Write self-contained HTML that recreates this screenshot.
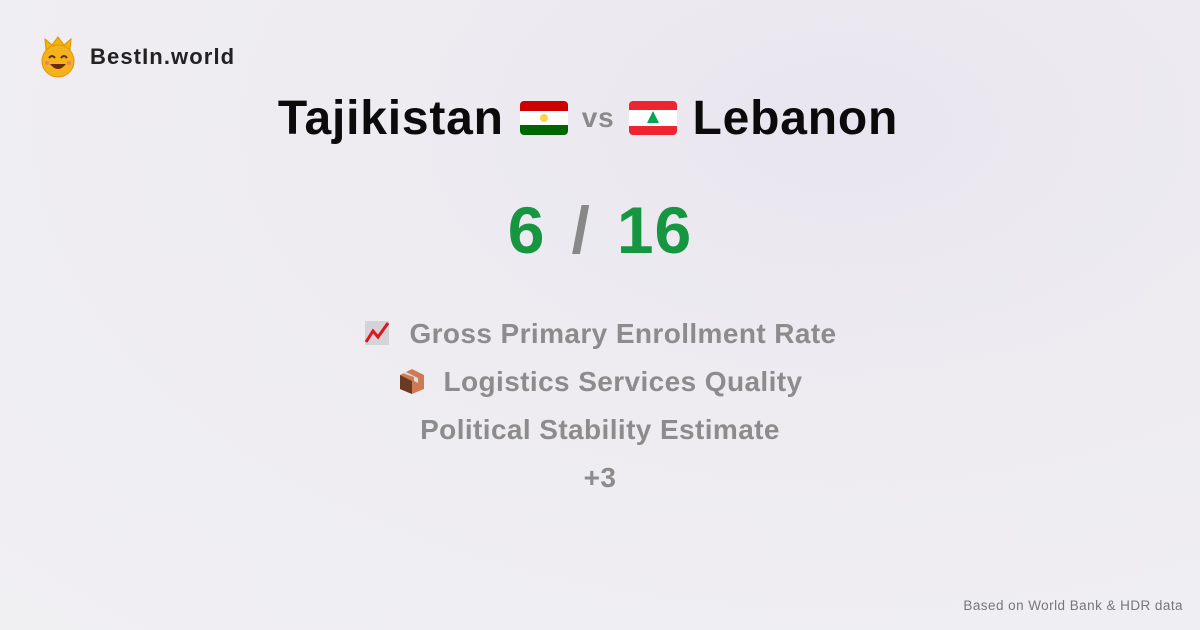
<!DOCTYPE html>
<html><head><meta charset="utf-8"><style>
*{margin:0;padding:0;box-sizing:border-box}
body{width:1200px;height:630px;overflow:hidden;font-family:"Liberation Sans",sans-serif;background:radial-gradient(ellipse at 70% 20%,#e9e5f0 0%,#eeecf1 40%,#f0eff2 100%);position:relative}
.abs{position:absolute}
.logo{left:40px;top:36px}
.brand{left:90px;top:44px;font-size:22px;font-weight:bold;color:#222;letter-spacing:1.1px}
.title{top:88px;left:-12px;width:1200px;text-align:center;font-size:48px;font-weight:bold;color:#0b0b0b;white-space:nowrap;letter-spacing:.8px}
.title span,.title svg{vertical-align:middle}
.vs{color:#8a8a8a;font-size:28px;font-weight:bold;margin:0 14px}
.score{top:192px;left:0;width:1200px;text-align:center;font-size:66px;font-weight:bold;color:#169641;letter-spacing:1px}
.score .sl{color:#888;margin:0 26px}
.line{left:0;width:1200px;text-align:center;font-size:28px;font-weight:bold;color:#8c8c8c;letter-spacing:.4px}
.foot{right:17px;top:598px;font-size:13.5px;color:#777;letter-spacing:.45px}
</style></head><body>
<svg class="abs logo" width="36" height="42" viewBox="0 0 36 42">
<path d="M6 14 L5 3 L12 9 L18 1 L24 9 L31 3 L30 14 Z" fill="#f4b400" stroke="#d69400"/>
<circle cx="18" cy="25" r="16" fill="#f5b21f" stroke="#e09300"/>
<path d="M9 22 q3-4 6 0 M21 22 q3-4 6 0" stroke="#5a3000" stroke-width="2" fill="none"/>
<path d="M10 28 q8 10 16 0 z" fill="#6b2a00"/>
<circle cx="7" cy="27" r="2" fill="#f0825a"/><circle cx="29" cy="27" r="2" fill="#f0825a"/>
</svg>
<div class="abs brand">BestIn.world</div>
<div class="abs title"><span>Tajikistan</span><svg width="48" height="34" viewBox="0 0 48 34" style="margin-left:16px"><rect width="48" height="34" rx="4" fill="#fff"/><path d="M4 0h40a4 4 0 0 1 4 4v6H0V4a4 4 0 0 1 4-4z" fill="#cc0000"/><path d="M0 24h48v6a4 4 0 0 1-4 4H4a4 4 0 0 1-4-4z" fill="#006600"/><circle cx="24" cy="17" r="4" fill="#f8c300" opacity=".7"/></svg><span class="vs">vs</span><svg width="48" height="34" viewBox="0 0 48 34" style="margin-right:16px"><rect width="48" height="34" rx="4" fill="#ee2433"/><rect y="9" width="48" height="16" fill="#fff"/><path d="M24 10l6 12H18z" fill="#00a651"/></svg><span>Lebanon</span></div>
<div class="abs score">6<span class="sl">/</span>16</div>
<div class="abs line" style="top:318px"><svg width="28" height="28" viewBox="0 0 28 28" style="vertical-align:-4px;margin-right:18px"><g fill="#d3d3d8"><rect x="2" y="2" width="24" height="24"/></g><path d="M3 23 L10 12 L15 18 L25 4" stroke="#e0161b" stroke-width="3" fill="none"/></svg>Gross Primary Enrollment Rate</div>
<div class="abs line" style="top:366px"><svg width="28" height="28" viewBox="0 0 28 28" style="vertical-align:-4px;margin-right:18px"><path d="M14 2 L26 8 V22 L14 27 L2 22 V8 Z" fill="#d07a55"/><path d="M2 8 L14 14 V27 L2 22Z" fill="#6b3a22"/><path d="M8 5 L20 11 V16 L16 14 V10 L4 6Z" fill="#ddd"/></svg>Logistics Services Quality</div>
<div class="abs line" style="top:414px">Political Stability Estimate</div>
<div class="abs line" style="top:462px">+3</div>
<div class="abs foot">Based on World Bank &amp; HDR data</div>
</body></html>
